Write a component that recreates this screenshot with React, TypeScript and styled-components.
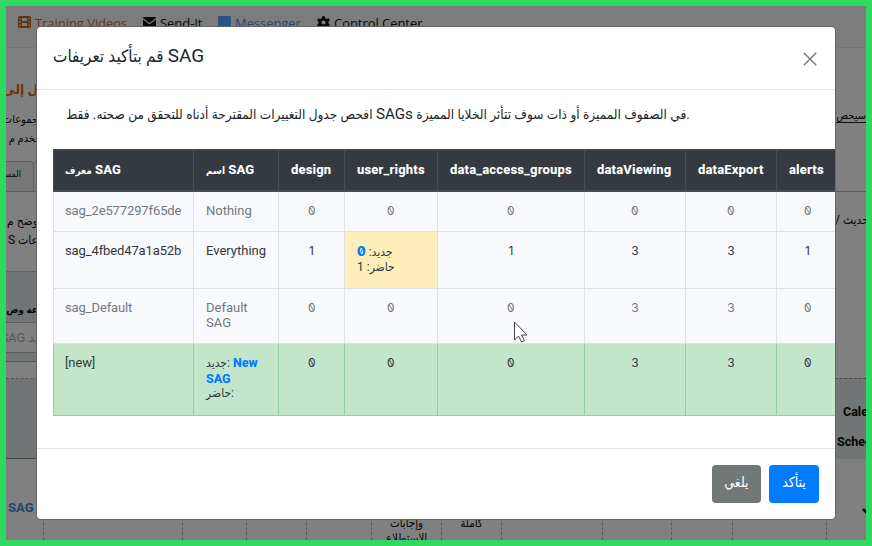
import React from "react";
import styled, { createGlobalStyle, css } from "styled-components";

const latin = `Roboto, "Liberation Sans"`;
const arabic = `"DejaVu Sans Condensed", "DejaVu Sans", sans-serif`;

const Global = createGlobalStyle`
  * { box-sizing: border-box; }
  body { margin: 0; background: #2fd95f; font-family: ${latin}, ${arabic}; }
`;

const Frame = styled.div`
  position: relative;
  width: 872px;
  height: 546px;
  border: 6px solid #2fd95f;
  background: #808080;
  overflow: hidden;
`;

/* ---------- dimmed page behind the dialog ---------- */

const Navbar = styled.nav`
  display: flex;
  height: 42px;
  padding: 8px 0 0 12px;
  background: #7c7c7c;
  border-bottom: 1px solid #747474;
`;

const NavItem = styled.span<{ $color: string; $width: number }>`
  display: flex;
  gap: 4px;
  width: ${(p) => p.$width}px;
  color: ${(p) => p.$color};
  font: 13px/18px "Open Sans", sans-serif;
  letter-spacing: -0.05px;
  white-space: nowrap;
  svg { flex: none; margin-top: 2px; }
`;

const Columns = styled.div`
  display: flex;
  justify-content: space-between;
  height: 411px;
`;

const LeftStrip = styled.div`
  display: flex;
  flex-direction: column;
  width: 32px;
  overflow: hidden;
`;

const RightStrip = styled(LeftStrip)`
  width: 31px;
`;

const Line = styled.div<{
  $h: number; $size?: number; $color?: string; $bold?: boolean; $rtl?: boolean; $under?: string; $indent?: number;
}>`
  display: flex;
  flex: none;
  align-items: center;
  direction: ${(p) => (p.$rtl ? "rtl" : "ltr")};
  height: ${(p) => p.$h}px;
  padding-left: ${(p) => p.$indent ?? 0}px;
  font-size: ${(p) => p.$size ?? 11}px;
  font-weight: ${(p) => (p.$bold ? 700 : 400)};
  color: ${(p) => p.$color ?? "#050505"};
  white-space: pre;
  border-bottom: ${(p) => (p.$under ? `1px solid ${p.$under}` : "0")};
`;

const Gap = styled.div<{ $h: number }>`
  flex: none;
  height: ${(p) => p.$h}px;
`;

const Tabs = styled.div`
  display: flex;
  flex: none;
  gap: 1px;
  height: 31px;
  border-bottom: 1px solid #5c5c5c;
`;

const Tab = styled.div<{ $width: number }>`
  flex: none;
  width: ${(p) => p.$width}px;
  border: solid #5c5c5c;
  border-width: 1px 1px 0 0;
  border-radius: 0 4px 0 0;
  background: #777;
  font-size: 9px;
  line-height: 25px;
  color: #050505;
  direction: rtl;
  padding-right: 12px;
  white-space: nowrap;
`;

const Panel = styled.div`
  flex: none;
  display: flex;
  flex-direction: column;
  height: 188px;
  border-top: 1px solid #616465;
  border-bottom: 1px solid #44484a;
  background: #727576;
`;

const Field = styled.div`
  display: flex;
  flex: none;
  align-items: center;
  direction: rtl;
  height: 31px;
  border: solid #5d5d5d;
  border-width: 1px 0;
  background: #808080;
  color: #575757;
  font-size: 13px;
  white-space: nowrap;
`;

const Blank = styled.div`
  flex: none;
  height: 18px;
  margin-top: 8px;
  border-top: 1px solid #555;
  border-bottom: 1px dashed #50535a;
  background: #808080;
`;

const RolesHead = styled.div`
  flex: none;
  display: flex;
  flex-direction: column;
  height: 82px;
  padding-top: 17px;
  border-top: 1px dashed #45484e;
  border-bottom: 1px solid #44484a;
  background: #727576;
`;

const RoleRow = styled.div`
  display: flex;
  height: 81px;
`;

const RoleCell = styled.div<{ $width: number; $pad?: number }>`
  flex: none;
  width: ${(p) => p.$width}px;
  padding-top: ${(p) => p.$pad ?? 57}px;
  border-right: 1px dashed #5a5a5a;
  text-align: center;
  font-size: 11.5px;
  line-height: 15px;
  color: #050505;
`;

const RoleName = styled.div`
  margin-left: 2px;
  text-align: left;
  font: 700 13px/18px Roboto, sans-serif;
  color: #194672;
`;

/* ---------- dialog ---------- */

const Dialog = styled.section`
  position: absolute;
  left: 31px;
  top: 21px;
  display: flex;
  flex-direction: column;
  width: 798px;
  height: 492px;
  border-radius: 4px;
  background: #fff;
  box-shadow: 0 0 0 1px #666;
  overflow: hidden;
`;

const DialogHead = styled.header`
  display: flex;
  justify-content: space-between;
  height: 63px;
  padding: 16px 18px 0 16px;
  border-bottom: 1px solid #dee2e6;
  svg { margin-top: 9px; }
`;

const Title = styled.h5`
  margin: 0;
  font-size: 17px;
  font-weight: 400;
  line-height: 26px;
  color: #212529;
  white-space: nowrap;
`;

const Big = styled.span<{ $size: number }>`
  font-size: ${(p) => p.$size}px;
`;

const Body = styled.div`
  height: 358px;
  padding-left: 16px;
`;

const Intro = styled.p`
  margin: 0;
  height: 59px;
  padding: 12px 0 0 13px;
  font-size: 13.52px;
  line-height: 24px;
  color: #212529;
  white-space: nowrap;
`;

const Scroller = styled.div`
  overflow: hidden;
`;

const Table = styled.table`
  table-layout: fixed;
  width: 786px;
  border-collapse: separate;
  border-spacing: 0;
  font-size: 13px;
  line-height: 15px;
`;

const Col = styled.col<{ $w: number }>`
  width: ${(p) => p.$w}px;
`;

const Th = styled.th`
  height: 43px;
  padding: 0 0 1px 12px;
  border: solid #454d55;
  border-width: 1px 1px 2px 0;
  background: #343a40;
  color: #fff;
  font-weight: 800;
  letter-spacing: 0.17px;
  text-align: left;
  white-space: nowrap;
  &:first-child { border-left-width: 1px; padding-left: 11px; }
`;

const Small = styled.span`
  font-size: 10px;
  letter-spacing: 0;
`;

type Tone = "muted" | "plain" | "added";

const Row = styled.tr<{ $h: number; $tone: Tone }>`
  height: ${(p) => p.$h}px;
  background: ${(p) => (p.$tone === "added" ? "#c3e6cb" : "#f8f9fc")};
  color: ${(p) => (p.$tone === "muted" ? "#74787c" : "#33383d")};
  td { border-color: ${(p) => (p.$tone === "added" ? "#8fd19e" : "#dee2e6")}; }
`;

const Td = styled.td<{ $center?: boolean; $changed?: boolean }>`
  padding: 11px 0 0 12px;
  border-style: solid;
  border-width: 0 1px 1px 0;
  vertical-align: top;
  &:first-child { border-left-width: 1px; padding-left: 11px; letter-spacing: -0.12px; }
  ${(p) => p.$center && css`
    padding-left: 0;
    text-align: center;
    font-family: Inter, sans-serif;
    font-size: 12px;
    font-feature-settings: "zero";
  `}
  ${(p) => p.$changed && css`
    padding-top: 12px;
    background: #ffeeba;
  `}
`;

/* Mirrored so that the stroke through a zero falls from left to right. */
const Zero = styled.span`
  display: inline-block;
  transform: scaleX(-1);
`;

const Diff = styled.div`
  height: 15.5px;
  white-space: nowrap;
  font-size: 12px;
`;

const Fresh = styled.b<{ $zero?: boolean }>`
  color: #007bff;
  font-size: 12.5px;
  font-family: ${(p) => (p.$zero ? "Inter" : "Roboto")}, sans-serif;
  font-weight: 800;
  font-feature-settings: "zero";
`;

const DialogFoot = styled.footer`
  display: flex;
  justify-content: flex-end;
  gap: 8px;
  flex: 1;
  padding: 16px 16px 0 0;
  border-top: 1px solid #dee2e6;
`;

const Button = styled.button<{ $bg: string; $w: number }>`
  width: ${(p) => p.$w}px;
  height: 38px;
  padding: 0 0 5px;
  border: 0;
  border-radius: 4px;
  background: ${(p) => p.$bg};
  color: #fff;
  font: 14px ${arabic};
`;

const Cursor = styled.svg`
  position: absolute;
  left: 507px;
  top: 315px;
`;

const columns: [string, number][] = [
  ["معرف", 141],
  ["اسم", 85],
  ["design", 66],
  ["user_rights", 93],
  ["data_access_groups", 147],
  ["dataViewing", 101],
  ["dataExport", 91],
  ["alerts", 62],
];

const Cells = ({ values }: { values: number[] }) => (
  <>{values.map((v, i) => <Td key={i} $center>{v === 0 ? <Zero>0</Zero> : v}</Td>)}</>
);

export default function App() {
  return (
    <Frame>
      <Global />
      <Navbar>
        <NavItem $color="#5e3a1c" $width={125}>
          <svg width="13" height="12" viewBox="0 0 13 12">
            <rect width="13" height="12" rx="1.5" fill="#5c3414" />
            <path d="M4 2h5v3H4zM4 7h5v3H4zM1.2 2h1.4v1.5H1.2zM1.2 5.2h1.4v1.5H1.2zM1.2 8.4h1.4v1.5H1.2zM10.4 2h1.4v1.5h-1.4zM10.4 5.2h1.4v1.5h-1.4zM10.4 8.4h1.4v1.5h-1.4z" fill="#7c7c7c" />
          </svg>
          Training Videos
        </NavItem>
        <NavItem $color="#080808" $width={75}>
          <svg width="13" height="12" viewBox="0 0 13 12">
            <path d="M1 1h11q1 0 1 1L6.5 7 0 2q0-1 1-1zM0 3.5 6.5 8.5 13 3.5V10q0 1-1 1H1q-1 0-1-1z" fill="#080808" />
          </svg>
          Send-It
        </NavItem>
        <NavItem $color="#1f4a73" $width={99}>
          <svg width="13" height="13" viewBox="0 0 13 13">
            <path d="M1.5 0h10Q13 0 13 1.5v8Q13 11 11.5 11H6l-3 2v-2H1.5Q0 11 0 9.500v-8Q0 0 1.500 0z" fill="#245583" />
          </svg>
          Messenger
        </NavItem>
        <NavItem $color="#080808" $width={130}>
          <svg width="13" height="13" viewBox="-6.500 -6.500 13 13">
            <path d="M-1.300-6.300h2.600l.4 2 1.500.8 1.900-.7 1.300 2.200-1.500 1.300v1.400l1.500 1.300-1.300 2.200-1.900-.7-1.500.8-.4 2h-2.600l-.4-2-1.500-.8-1.900.7-1.300-2.200L-4.900.7V-.7l-1.500-1.300 1.300-2.200 1.900.7 1.500-.8zM0-2.100a2.100 2.100 0 1 0 0 4.200 2.100 2.100 0 0 0 0-4.200z" fill="#080808" />
          </svg>
          Control Center
        </NavItem>
      </Navbar>
      <Columns>
        <LeftStrip>
          <Gap $h={30} />
          <Line $h={22} $size={13.5} $bold $color="#6b3410" $rtl>ل إلى</Line>
          <Gap $h={9} />
          <Line $h={20} $rtl>جموعات</Line>
          <Line $h={18} $rtl>تخدم م</Line>
          <Gap $h={14} />
          <Tabs>
            <Tab $width={28}>المس</Tab>
            <Tab $width={10} />
          </Tabs>
          <Gap $h={19} />
          <Line $h={19} $size={12} $rtl>وضح م</Line>
          <Line $h={19} $size={12} $rtl>عات S</Line>
          <Gap $h={22} />
          <Panel>
            <Gap $h={24} />
            <Line $h={26} $size={10} $bold $rtl>عة وص</Line>
            <Field>يد SAG</Field>
            <Blank />
          </Panel>
        </LeftStrip>
        <RightStrip>
          <Gap $h={61} />
          <Line $h={14} $under="#111" $rtl>سيحص</Line>
          <Gap $h={68} />
          <Line $h={1} $under="#5c5c5c" />
          <Gap $h={18} />
          <Line $h={19} $size={12}>/ حديث</Line>
          <Gap $h={149} />
          <RolesHead>
            <Line $h={30} $size={12.5} $bold $indent={8}>Calendar</Line>
            <Line $h={30} $size={12.5} $bold $indent={2}>Scheduling</Line>
          </RolesHead>
        </RightStrip>
      </Columns>
      <RoleRow>
        <RoleCell $width={38} $pad={40}><RoleName>SAG</RoleName></RoleCell>
        <RoleCell $width={139} />
        <RoleCell $width={64} />
        <RoleCell $width={60} />
        <RoleCell $width={65} />
        <RoleCell $width={70}>وإجابات الاستطلاع</RoleCell>
        <RoleCell $width={60}>كاملة</RoleCell>
        <RoleCell $width={101} />
        <RoleCell $width={69} />
        <RoleCell $width={61} />
        <RoleCell $width={94} />
        <RoleCell $width={84} $pad={44}>
          <svg width="14" height="12" viewBox="0 0 14 12">
            <path d="M1 6l4 4 8-9" fill="none" stroke="#080808" strokeWidth="2.500" />
          </svg>
        </RoleCell>
      </RoleRow>

      <Dialog>
        <DialogHead>
          <Title>قم بتأكيد تعريفات <Big $size={19}>SAG</Big></Title>
          <svg width="14" height="14" viewBox="0 0 14 14">
            <path d="M.8.8l12.400 12.400M13.200.8.8 13.200" stroke="#7b7f80" strokeWidth="1.600" />
          </svg>
        </DialogHead>
        <Body>
          <Intro>
            افحص جدول التغييرات المقترحة أدناه للتحقق من صحته. فقط <Big $size={15.2}>SAGs</Big> في
            الصفوف المميزة أو ذات سوف تتأثر الخلايا المميزة.
          </Intro>
          <Scroller>
            <Table>
              <colgroup>{columns.map(([n, w]) => <Col key={n} $w={w} />)}</colgroup>
              <thead>
                <tr>
                  {columns.map(([n], i) => (
                    <Th key={n}>{i < 2 ? <><Small>{n}</Small> SAG</> : n}</Th>
                  ))}
                </tr>
              </thead>
              <tbody>
                <Row $h={40} $tone="muted">
                  <Td>sag_2e577297f65de</Td>
                  <Td>Nothing</Td>
                  <Cells values={[0, 0, 0, 0, 0, 0]} />
                </Row>
                <Row $h={57} $tone="plain">
                  <Td>sag_4fbed47a1a52b</Td>
                  <Td>Everything</Td>
                  <Cells values={[1]} />
                  <Td $changed>
                    <Diff>جديد: <Fresh $zero>0</Fresh></Diff>
                    <Diff>حاضر: 1</Diff>
                  </Td>
                  <Cells values={[1, 3, 3, 1]} />
                </Row>
                <Row $h={55} $tone="muted">
                  <Td>sag_Default</Td>
                  <Td>Default<br />SAG</Td>
                  <Cells values={[0, 0, 0, 3, 3, 0]} />
                </Row>
                <Row $h={72} $tone="added">
                  <Td>[new]</Td>
                  <Td>
                    <Diff>جديد: <Fresh>New</Fresh></Diff>
                    <Diff><Fresh>SAG</Fresh></Diff>
                    <Diff>حاضر:</Diff>
                  </Td>
                  <Cells values={[0, 0, 0, 3, 3, 0]} />
                </Row>
              </tbody>
            </Table>
          </Scroller>
        </Body>
        <DialogFoot>
          <Button $bg="#727778" $w={49}>يلغي</Button>
          <Button $bg="#007bff" $w={50}>يتأكد</Button>
        </DialogFoot>
      </Dialog>
      <Cursor width="15" height="22" viewBox="0 0 15 22">
        <path d="M1.500 1v18l4-4 3 6 3-1.500-3-5.500H14z" fill="#fff" stroke="#444" />
      </Cursor>
    </Frame>
  );
}
